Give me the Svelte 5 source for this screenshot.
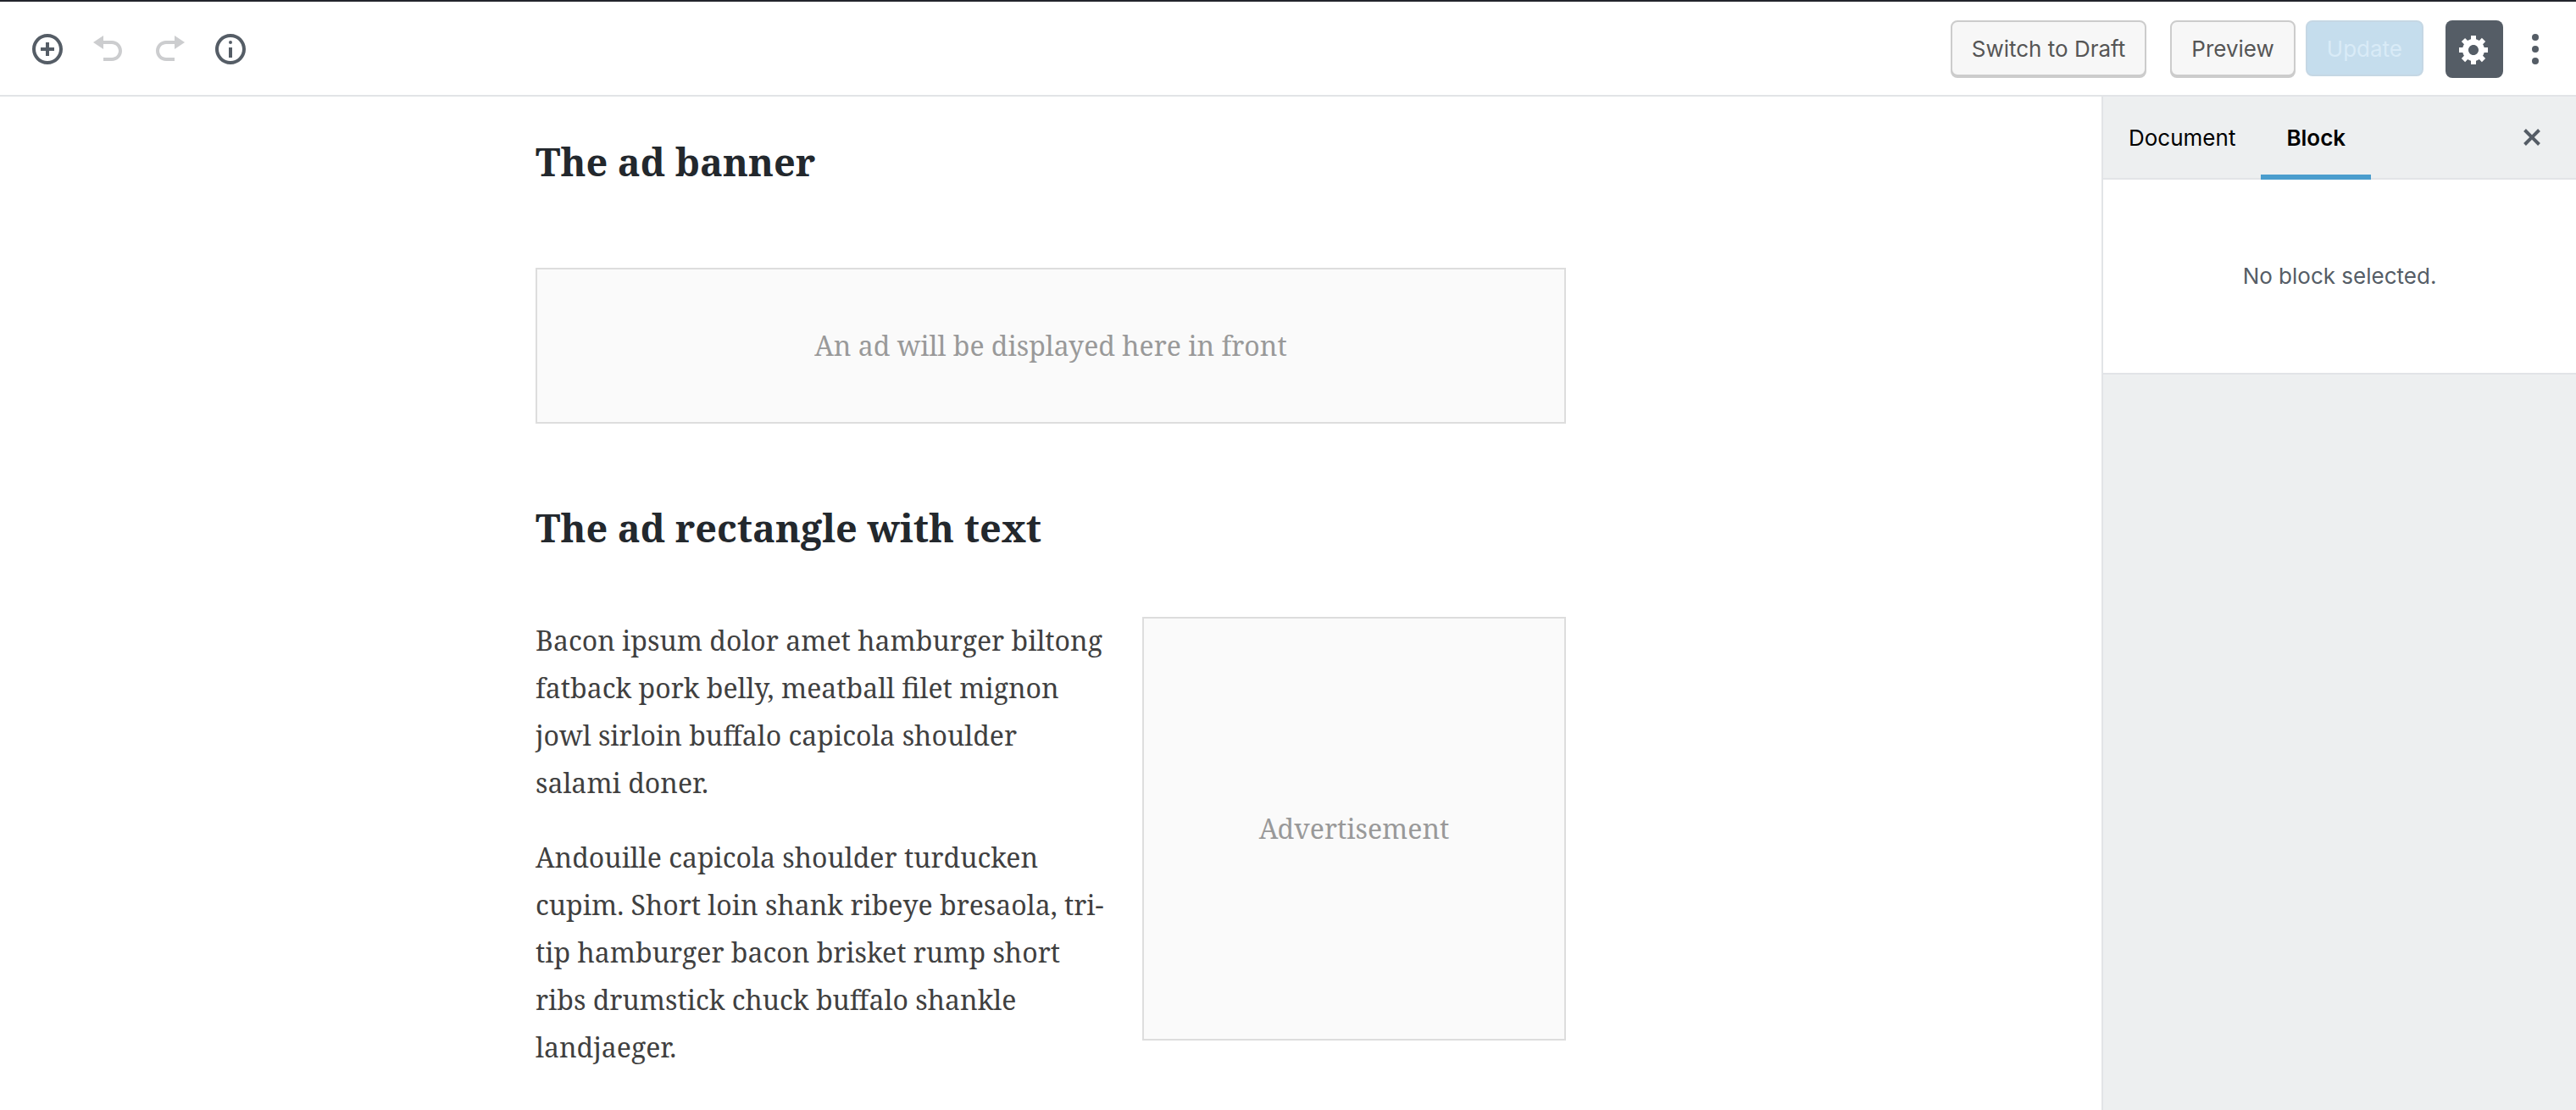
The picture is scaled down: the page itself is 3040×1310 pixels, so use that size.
<script>
  const tools = [
    {
      label: 'Add block',
      disabled: false,
      path: 'M10 1c-5 0-9 4-9 9s4 9 9 9 9-4 9-9-4-9-9-9zm0 16c-3.9 0-7-3.1-7-7s3.1-7 7-7 7 3.1 7 7-3.1 7-7 7zm1-11H9v3H6v2h3v3h2v-3h3V9h-3V6z'
    },
    {
      label: 'Undo',
      disabled: true,
      path: 'M12 5H7V2L1 6l6 4V7h5c2.2 0 4 1.8 4 4s-1.8 4-4 4H7v2h5c3.3 0 6-2.7 6-6s-2.7-6-6-6z'
    },
    {
      label: 'Redo',
      disabled: true,
      path: 'M8 5h5V2l6 4-6 4V7H8c-2.2 0-4 1.8-4 4s1.8 4 4 4h5v2H8c-3.3 0-6-2.7-6-6s2.7-6 6-6z'
    },
    {
      label: 'Content structure',
      disabled: false,
      path: 'M10 1c-5 0-9 4-9 9s4 9 9 9 9-4 9-9-4-9-9-9zm0 16c-3.9 0-7-3.1-7-7s3.1-7 7-7 7 3.1 7 7-3.1 7-7 7zM9 9h2v6H9zM10 5a1 1 0 1 1 0 2 1 1 0 0 1 0-2z'
    }
  ];

  const paragraphs = [
    'Bacon ipsum dolor amet hamburger biltong fatback pork belly, meatball filet mignon jowl sirloin buffalo capicola shoulder salami doner.',
    'Andouille capicola shoulder turducken cupim. Short loin shank ribeye bresaola, tri-tip hamburger bacon brisket rump short ribs drumstick chuck buffalo shankle landjaeger.'
  ];

  let tab = $state('Block');
</script>

<div class="editor">
  <header class="toolbar">
    <div class="tools">
      {#each tools as tool}
        <button class="tool" type="button" aria-label={tool.label} disabled={tool.disabled}>
          <svg viewBox="0 0 20 20" aria-hidden="true"><path d={tool.path} /></svg>
        </button>
      {/each}
    </div>
    <div class="actions">
      <button class="button draft" type="button">Switch to Draft</button>
      <button class="button" type="button">Preview</button>
      <button class="button primary" type="button" disabled>Update</button>
      <button class="settings" type="button" aria-label="Settings" aria-pressed="true">
        <svg viewBox="0 0 20 20" aria-hidden="true">
          <path d="M18 12h-2.18c-.17.7-.44 1.35-.81 1.93l1.54 1.54-2.1 2.1-1.54-1.54c-.58.36-1.23.63-1.91.79V19H8v-2.18c-.68-.16-1.33-.43-1.91-.79l-1.54 1.54-2.12-2.12 1.54-1.54c-.36-.58-.63-1.23-.79-1.91H1V9.03h2.17c.16-.7.44-1.35.8-1.94L2.43 5.55l2.1-2.1 1.54 1.54c.58-.37 1.24-.64 1.93-.81V2h3v2.18c.68.16 1.33.43 1.91.79l1.54-1.54 2.12 2.12-1.54 1.54c.36.59.64 1.24.8 1.94H18V12zm-8.5 1.5c1.66 0 3-1.34 3-3s-1.34-3-3-3-3 1.34-3 3 1.34 3 3 3z" />
        </svg>
      </button>
      <button class="more" type="button" aria-label="More">
        <svg viewBox="0 0 20 20" aria-hidden="true">
          <circle cx="10" cy="3" r="2" /><circle cx="10" cy="10" r="2" /><circle cx="10" cy="17" r="2" />
        </svg>
      </button>
    </div>
  </header>

  <div class="body">
    <main class="canvas">
      <article class="post">
        <section class="block">
          <h2>The ad banner</h2>
          <div class="ad banner">An ad will be displayed here in front</div>
        </section>
        <section class="block tight">
          <h2>The ad rectangle with text</h2>
          <div class="columns">
            <div class="copy">
              {#each paragraphs as text}
                <p>{text}</p>
              {/each}
            </div>
            <div class="ad rectangle">Advertisement</div>
          </div>
        </section>
      </article>
    </main>

    <aside class="sidebar">
      <div class="tabs">
        {#each ['Document', 'Block'] as name}
          <button class="tab" class:active={tab === name} type="button" onclick={() => (tab = name)}>{name}</button>
        {/each}
        <button class="close" type="button" aria-label="Close settings">
          <svg viewBox="0 0 20 20" aria-hidden="true">
            <path d="M14.95 6.46L11.41 10l3.54 3.54-1.41 1.41L10 11.42l-3.53 3.53-1.42-1.42L8.58 10 5.05 6.47l1.42-1.42L10 8.58l3.54-3.53z" />
          </svg>
        </button>
      </div>
      <div class="panel">No block selected.</div>
    </aside>
  </div>
</div>

<style>
  :global(body) {
    margin: 0;
    background: #fff;
  }

  .editor {
    display: flex;
    flex-direction: column;
    min-height: 100vh;
    box-sizing: border-box;
    border-top: 2px solid #23252c;
    font-family: Inter, Roboto, sans-serif;
    font-size: 26px;
    line-height: 36px;
    color: #555d66;
  }

  .editor * {
    box-sizing: border-box;
  }

  button {
    margin: 0;
    padding: 0;
    border: 0;
    background: none;
    color: inherit;
    font: inherit;
  }

  svg {
    display: block;
    width: 40px;
    height: 40px;
    fill: currentColor;
  }

  .toolbar {
    display: flex;
    align-items: center;
    justify-content: space-between;
    min-height: 112px;
    padding: 2px 10px 0 20px;
    border-bottom: 2px solid #e2e4e7;
  }

  .tools,
  .actions {
    display: flex;
    align-items: center;
  }

  .tool {
    display: grid;
    place-items: center;
    width: 72px;
    height: 72px;
  }

  .tool:disabled {
    color: #cccdcf;
  }

  .actions {
    height: 68px;
    align-items: flex-start;
  }

  .button {
    height: 66px;
    margin-right: 12px;
    padding: 2px 23px 0;
    border: 2px solid #ccc;
    border-radius: 8px;
    background: #f7f7f7;
    box-shadow: 0 2px 0 #ccc;
    color: #555;
    white-space: nowrap;
  }

  .draft {
    margin-right: 28px;
  }

  .primary {
    margin-right: 26px;
    border-color: #c5d7e4;
    background: #c5dded;
    box-shadow: none;
    color: #d9ebf7;
  }

  .settings {
    display: grid;
    place-items: center;
    width: 68px;
    height: 68px;
    border-radius: 8px;
    background: #555d66;
    color: #fff;
  }

  .more {
    display: grid;
    place-items: center;
    width: 76px;
    height: 68px;
  }

  .body {
    display: flex;
    flex: 1;
  }

  .canvas {
    flex: 1;
    padding: 0 40px;
  }

  .post {
    max-width: 1216px;
    margin: 0 auto;
    font-family: "Noto Serif", "DejaVu Serif Condensed", "DejaVu Serif", serif;
    font-size: 32px;
    line-height: 56px;
    color: #404040;
  }

  .block {
    padding: 44px 0 46px;
  }

  .block.tight {
    padding-bottom: 0;
  }

  h2 {
    margin: 0 0 92px;
    font-size: 45px;
    line-height: 66px;
    font-weight: 700;
    color: #23282d;
  }

  .tight h2 {
    margin-bottom: 72px;
  }

  .ad {
    display: flex;
    align-items: center;
    justify-content: center;
    border: 2px solid #ddd;
    background: #fafafa;
    color: #999;
  }

  .banner {
    min-height: 184px;
  }

  .columns {
    display: flex;
    align-items: flex-start;
    gap: 40px;
  }

  .copy {
    flex: 1;
  }

  p {
    margin: 0 0 32px;
  }

  .rectangle {
    width: 500px;
    aspect-ratio: 1;
  }

  .sidebar {
    width: 560px;
    border-left: 2px solid #e2e4e7;
    background: #edeff0;
  }

  .tabs {
    display: flex;
    min-height: 98px;
    border-bottom: 2px solid #e2e4e7;
  }

  .tab {
    margin-bottom: -2px;
    padding: 6px 30px 0;
    border-bottom: 6px solid transparent;
    color: #000;
  }

  .tab.active {
    border-bottom-color: #4a9dcd;
    font-weight: 600;
  }

  .close {
    display: grid;
    place-items: center;
    width: 72px;
    margin: 0 16px 0 auto;
  }

  .panel {
    display: flex;
    align-items: center;
    justify-content: center;
    min-height: 230px;
    border-bottom: 2px solid #e2e4e7;
    background: #fff;
  }
</style>
